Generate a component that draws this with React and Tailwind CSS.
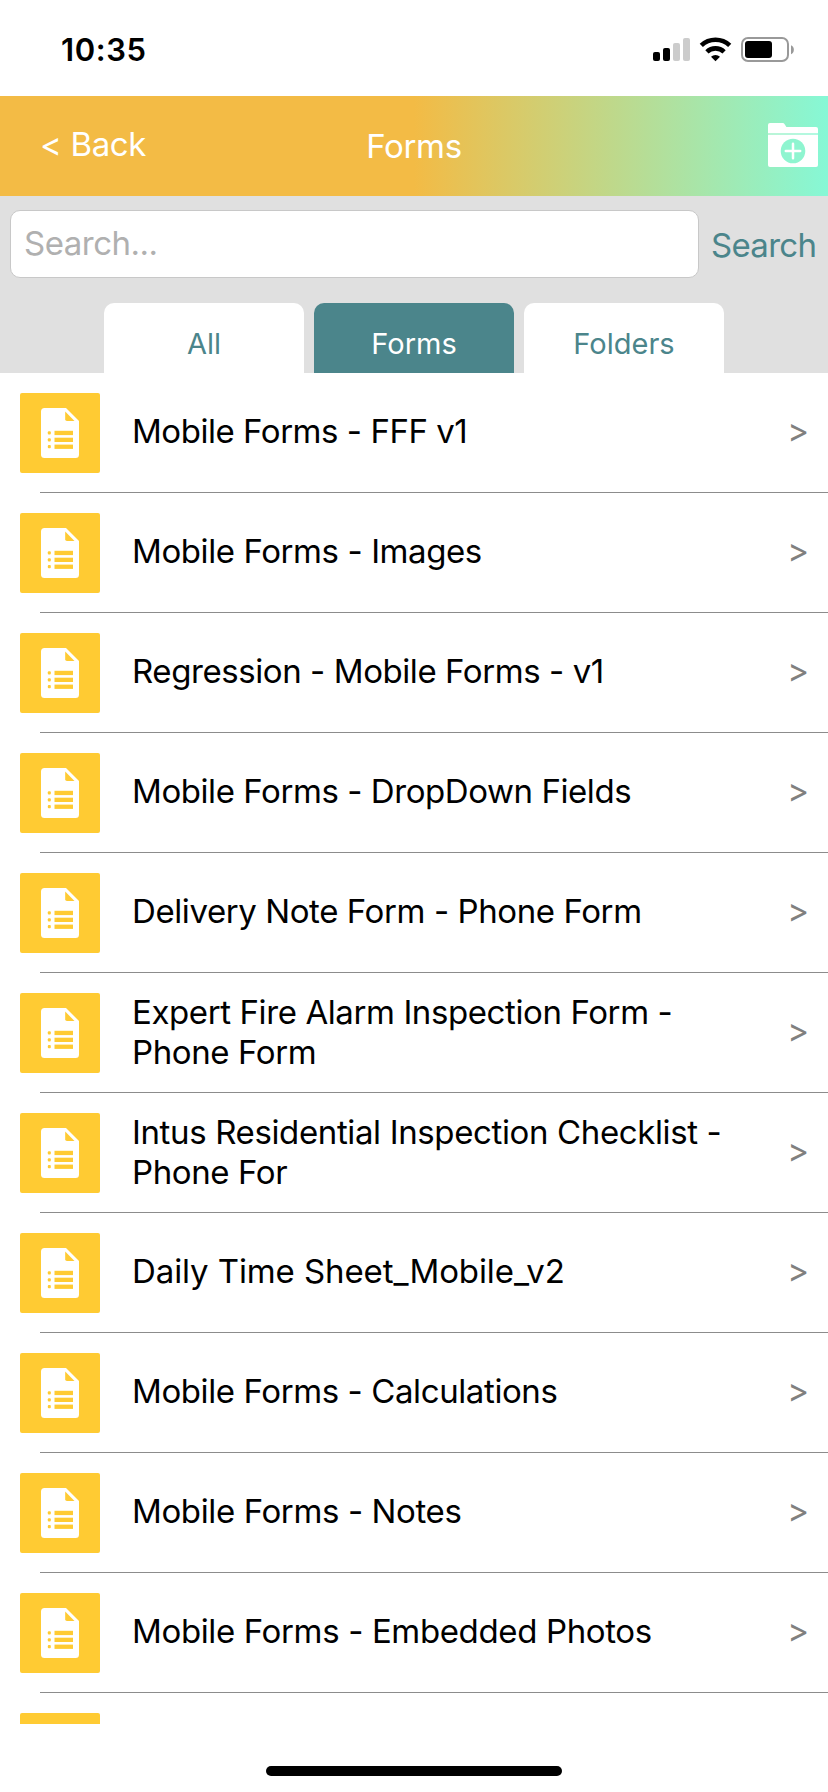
const forms = [
  { lines: [["Mobile Forms - FFF v1", "tracking-[-0.46px]"]] },
  { lines: [["Mobile Forms - Images", "tracking-[-0.41px]"]] },
  { lines: [["Regression - Mobile Forms - v1", "tracking-[-0.42px]"]] },
  { lines: [["Mobile Forms - DropDown Fields", "tracking-[-0.43px]"]] },
  { lines: [["Delivery Note Form - Phone Form", "tracking-[-0.41px]"]] },
  {
    lines: [
      ["Expert Fire Alarm Inspection Form -", "tracking-[-0.4px]"],
      ["Phone Form", "tracking-[-0.4px]"],
    ],
  },
  {
    lines: [
      ["Intus Residential Inspection Checklist -", "tracking-[-0.37px]"],
      ["Phone For", "tracking-[-0.4px]"],
    ],
  },
  { lines: [["Daily Time Sheet_Mobile_v2", "tracking-[-0.1px]"]] },
  { lines: [["Mobile Forms - Calculations", "tracking-[-0.4px]"]] },
  { lines: [["Mobile Forms - Notes", "tracking-[-0.38px]"]] },
  { lines: [["Mobile Forms - Embedded Photos", "tracking-[-0.36px]"]] },
  { lines: [] },
];

function StatusBar() {
  return (
    <div className="flex h-[96px] shrink-0 items-start justify-between bg-white pl-[61px] pr-[34px]">
      <span className="mt-[30px] text-[31px] leading-[40px] font-semibold tracking-[0.6px] text-black">10:35</span>
      <svg className="mt-[36px]" width="142" height="28" viewBox="652 36 142 28">
        <rect x="653" y="52" width="7" height="9" rx="2" fill="#000" />
        <rect x="663" y="48" width="7" height="13" rx="2" fill="#000" />
        <rect x="673" y="43" width="7" height="18" rx="2" fill="#ccc" />
        <rect x="683" y="38" width="7" height="23" rx="2" fill="#ccc" />
        <g fill="none" stroke="#000" strokeWidth="4.6">
          <path d="M701.3 45.4 A20.5 20.5 0 0 1 729.7 45.4" />
          <path d="M706.9 51.8 A12.4 12.4 0 0 1 724.1 51.8" />
        </g>
        <path d="M711 56.8 A6.6 6.6 0 0 1 720 56.8 L715.5 61.2 Z" fill="#000" />
        <rect x="742" y="38" width="46" height="23" rx="6" fill="none" stroke="#999" strokeWidth="2" />
        <rect x="745" y="41" width="27" height="17" rx="3" fill="#000" />
        <path d="M791 45.2 C794.8 46.6 794.8 52.8 791 54.2 Z" fill="#999" />
      </svg>
    </div>
  );
}

function FolderPlusIcon() {
  return (
    <svg width="50" height="44" viewBox="0 0 50 44">
      <path d="M0 10 V2 Q0 0 2 0 H14.5 Q16 0 16.8 1.4 L18.4 4 H48 Q50 4 50 6 V10 Z" fill="#fff" />
      <path d="M0 12 H50 V42 Q50 44 48 44 H2 Q0 44 0 42 Z" fill="#fff" />
      <path d="M0 11 H50" stroke="#fff" strokeOpacity="0.35" strokeWidth="2" />
      <circle cx="25" cy="28" r="12.3" fill="#8ff5d0" />
      <path d="M25 20.8 V35.2 M17.8 28 H32.2" stroke="#fff" strokeWidth="2.5" strokeLinecap="round" />
    </svg>
  );
}

function FormIcon() {
  return (
    <svg className="shrink-0" width="80" height="80" viewBox="0 0 80 80">
      <rect width="80" height="80" rx="2" fill="#ffcb33" />
      <path d="M24.5 15 H46 L59 28 V61.5 Q59 65 55.5 65 H24.5 Q21 65 21 61.5 V18.5 Q21 15 24.5 15 Z" fill="#fff" />
      <path d="M45.2 18.5 L54.5 28 H47 Q45.2 28 45.2 26.2 Z" fill="#ffcb33" />
      <g fill="#ffcb33">
        <rect x="34.5" y="37.8" width="18.5" height="4.3" />
        <rect x="34.5" y="44.7" width="18.5" height="4.3" />
        <rect x="34.5" y="51.6" width="18.5" height="4.3" />
        <rect x="27.8" y="38.3" width="3" height="3.2" rx="1" />
        <rect x="27.8" y="45.2" width="3" height="3.2" rx="1" />
        <rect x="27.8" y="52.1" width="3" height="3.2" rx="1" />
      </g>
    </svg>
  );
}

function FormRow({ form }) {
  const empty = form.lines.length === 0;
  return (
    <li className="flex h-[120px] shrink-0 flex-col">
      <div className="flex h-[119px] shrink-0 pl-[20px] pr-[19px] pt-[20px]">
        <FormIcon />
        <div
          className={
            form.lines.length > 1
              ? "-mt-[1px] ml-[32px] flex h-[80px] flex-1 flex-col justify-center"
              : "-mt-[2px] ml-[32px] flex h-[80px] flex-1 flex-col justify-center"
          }
        >
          {form.lines.map(([text, tracking]) => (
            <span key={text} className={`text-[33px] leading-[40px] whitespace-nowrap text-black ${tracking}`}>
              {text}
            </span>
          ))}
        </div>
        {!empty && <span className="h-[80px] text-[33px] leading-[75px] text-[#808080]">&gt;</span>}
      </div>
      <div className="ml-[40px] h-px bg-[#8c8c8c]" />
    </li>
  );
}

export default function App() {
  return (
    <div className="flex h-[1792px] w-[828px] flex-col overflow-hidden bg-white font-['Inter',sans-serif]">
      <StatusBar />
      <header className="grid h-[100px] shrink-0 grid-cols-3 bg-linear-to-r/srgb from-[#f3bb45] from-50% to-[#86f8d6] text-[33px] leading-[40px] font-[370] tracking-[-0.35px] text-white">
        <span className="mt-[28px] pl-[40px]">&lt; Back</span>
        <span className="mt-[30px] text-center">Forms</span>
        <span className="mt-[27px] flex justify-end pr-[10px]">
          <FolderPlusIcon />
        </span>
      </header>
      <section className="flex h-[177px] shrink-0 flex-col justify-between bg-[#e0e0e0] pt-[14px]">
        <div className="flex items-center pl-[10px]">
          <div className="flex h-[68px] w-[689px] items-center rounded-[10px] border border-[#c8c8c8] bg-white pl-[13px] text-[33px] tracking-[-0.5px] text-[#b0b0b0]">
            Search...
          </div>
          <span className="ml-[12px] pt-[2px] text-[33px] leading-[40px] tracking-[-0.7px] text-[#4b858b]">Search</span>
        </div>
        <nav className="flex justify-center gap-[10px] text-[29px] leading-[81px] text-[#4b858b]">
          <div className="h-[70px] w-[200px] rounded-t-[10px] bg-white text-center">All</div>
          <div className="h-[70px] w-[200px] rounded-t-[10px] bg-[#4b858b] text-center text-white">Forms</div>
          <div className="h-[70px] w-[200px] rounded-t-[10px] bg-white text-center">Folders</div>
        </nav>
      </section>
      <ul className="flex h-[1351px] shrink-0 flex-col overflow-hidden">
        {forms.map((form, i) => (
          <FormRow key={i} form={form} />
        ))}
      </ul>
      <div className="mt-[42px] h-[10px] w-[296px] shrink-0 self-center rounded-full bg-black" />
    </div>
  );
}
